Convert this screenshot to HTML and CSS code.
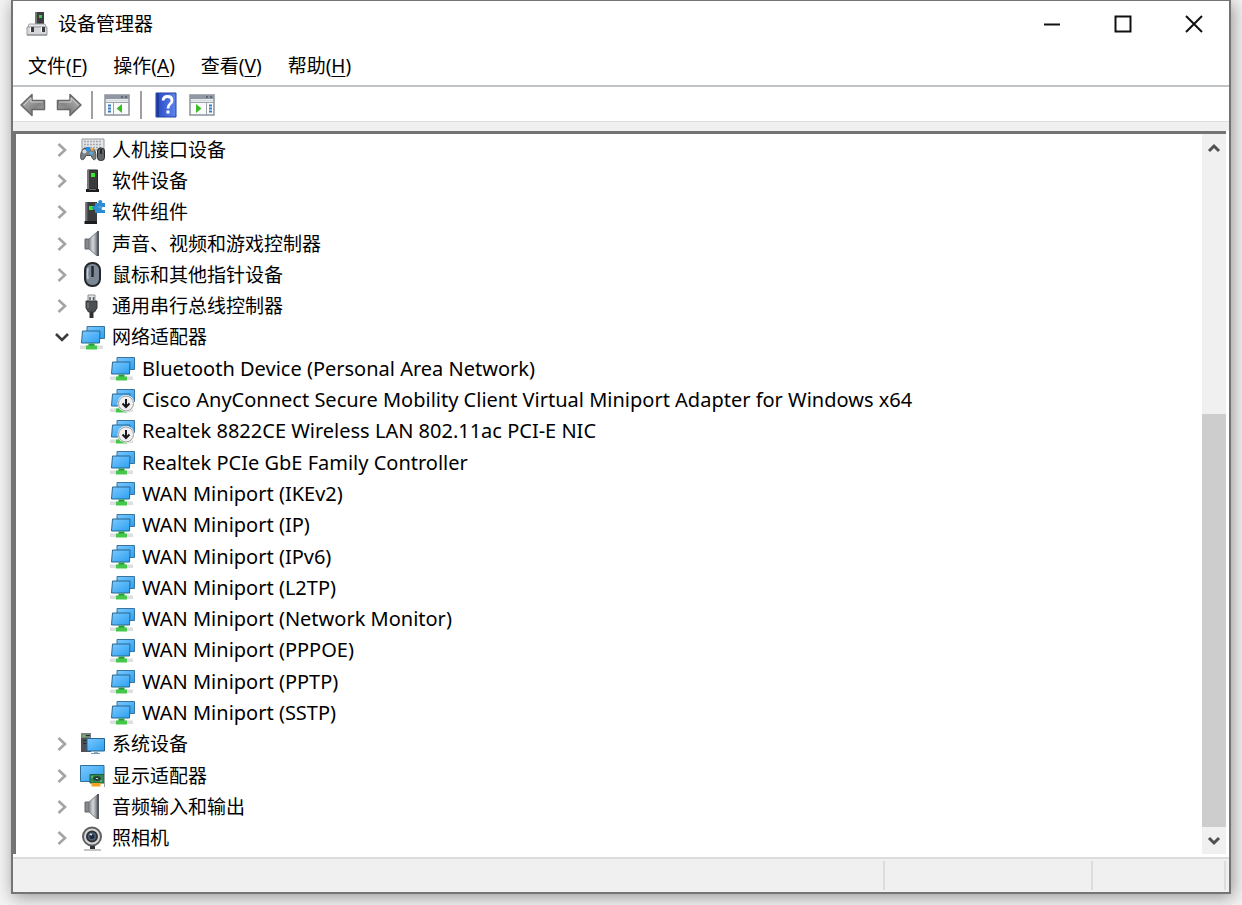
FILE: index.html
```html
<!DOCTYPE html>
<html lang="zh-CN">
<head>
    <meta charset="UTF-8">
    <meta name="viewport" content="width=device-width, initial-scale=1.0">
    <title>设备管理器</title>
    <link rel="stylesheet" href="styles.css">
</head>
<body>
    <!-- Icon sprite -->
    <svg class="sprite" aria-hidden="true">
        <defs>
            <linearGradient id="screen" x1="0" y1="0" x2="1" y2="1">
                <stop offset="0" stop-color="#7cc8ff"/>
                <stop offset="1" stop-color="#2ba0f0"/>
            </linearGradient>
            <linearGradient id="metal" x1="0" y1="0" x2="1" y2="0">
                <stop offset="0" stop-color="#85898d"/>
                <stop offset=".5" stop-color="#d4d8dc"/>
                <stop offset="1" stop-color="#7b7f83"/>
            </linearGradient>
            <linearGradient id="arrow" x1="0" y1="0" x2="1" y2="1">
                <stop offset="0" stop-color="#c4c4c4"/>
                <stop offset=".6" stop-color="#858585"/>
                <stop offset="1" stop-color="#a6a6a6"/>
            </linearGradient>
            <linearGradient id="book" x1="0" y1="0" x2="1" y2="0">
                <stop offset="0" stop-color="#2848b8"/>
                <stop offset=".4" stop-color="#3c60d6"/>
                <stop offset="1" stop-color="#5d86ee"/>
            </linearGradient>
        </defs>
        <symbol id="i-app" viewBox="0 0 24 26">
            <path d="M10 1h9v14h-9z" fill="#3b3d40"/>
            <path d="M10 1h2v14h-2z" fill="#74777a"/>
            <path d="M14 4h3v3h-3z" fill="#38d338"/>
            <path d="M4 13h16l1 3H3z" fill="#e6e7e9" stroke="#a4a6aa"/>
            <path d="M2 16h20v8H2z" fill="#d5d6d9" stroke="#9b9da3"/>
            <path d="M5 16h4v5H5zM16 16h4v5h-4z" fill="#3c3c3e"/>
            <path d="M5 16h1v5H5zM16 16h1v5h-1z" fill="#fff"/>
            <path d="M2 24h20" stroke="#85878d"/>
        </symbol>
        <symbol id="i-hid" viewBox="0 0 25 25">
            <path d="M2 2h22v11H2z" fill="#e4e6e8" stroke="#96999c"/>
            <path d="M4 4.500h18M4 7.500h18M4 10.500h18" stroke="#a5a8ab" stroke-width="1.500" stroke-dasharray="2 1"/>
            <path d="M1 22c-1-3 0-9 3-10.500h2l1 1h3l1-1h2c3 2 3.500 8 2.500 10.500-1 1.500-2.500.5-3-.5l-1.500-3H6l-2 3.500c-1 1-2.500.8-3 0z" fill="#7b8083" stroke="#4b4f52"/>
            <circle cx="4.500" cy="14.500" r="2" fill="#d9dde0"/>
            <path d="M6 10h4v4H6z" fill="#268ee8"/>
            <path d="M11 11h2.500v2.500H11z" fill="#ffae30"/>
            <path d="M10 15h2.500v2.500H10z" fill="#53b5f5"/>
            <rect x="17.500" y="11" width="7" height="12.500" rx="3" fill="#5e6468" stroke="#272a2c"/>
            <path d="M21 12v5" stroke="#16181a" stroke-width="1.500"/>
        </symbol>
        <symbol id="i-tower" viewBox="0 0 25 25">
            <path d="M7.500 2h10v19h-10z" fill="#393b3d" stroke="#232426"/>
            <path d="M7 2h2v19H7z" fill="#77797c"/>
            <path d="M11 5h4v4h-4z" fill="#36ec28"/>
            <path d="M6 21h13v3H6z" fill="#1c1d1e"/>
            <path d="M9 21.500h7" stroke="#686a6c"/>
        </symbol>
        <symbol id="i-component" viewBox="0 0 25 25">
            <path d="M5.500 2H17v19H5.500z" fill="#393b3d"/>
            <path d="M5.500 2h2v19h-2z" fill="#6a6c6f"/>
            <path d="M9 6h4v4H9z" fill="#36ec28"/>
            <path d="M4.500 21H17v3H4.500z" fill="#1c1d1e"/>
            <path d="M15 3h3.500a2 2 0 1 1 3.500 0h3v4h-2a1 1 0 0 0 0 3h2v3H15v-3.500a2 2 0 1 1 0-3.500z" fill="#2d8bd2"/>
            <path d="M18 7h4" stroke="#62b0ea"/>
        </symbol>
        <symbol id="i-speaker" viewBox="0 0 25 25">
            <path d="M5 8h4v10H5z" fill="#85898d" stroke="#606468"/>
            <path d="M9 8l8-7v24l-8-7z" fill="url(#metal)" stroke="#7d8185"/>
            <path d="M17 0h2v25h-2z" fill="#54585c"/>
        </symbol>
        <symbol id="i-mouse" viewBox="0 0 25 25">
            <rect x="5" y="1" width="15" height="23" rx="7" fill="#7b8795" stroke="#24272b" stroke-width="2"/>
            <path d="M8 6q-1 6 0 11" stroke="#c4cfda" stroke-width="1.500" fill="none"/>
            <path d="M12.500 4v11" stroke="#24272b" stroke-width="2.500"/>
        </symbol>
        <symbol id="i-usb" viewBox="0 0 25 25">
            <path d="M8 1h7v7H8z" fill="#e4e5e6" stroke="#8d8f91"/>
            <path d="M10 3v3M13.500 3v3" stroke="#55585a" stroke-width="1.500"/>
            <path d="M6 7h11v7l-2.500 4h-6L6 14z" fill="#4d5053" stroke="#333537"/>
            <path d="M9.500 18h4v6h-4z" fill="#2f3133"/>
            <path d="M8 9v5" stroke="#888b8e"/>
        </symbol>
        <symbol id="i-network" viewBox="0 0 25 25">
            <path d="M7 1.500h17.500v12H7z" fill="url(#screen)" stroke="#37759e"/>
            <path d="M2.500 6h17.500l-.5 12h-18z" fill="url(#screen)" stroke="#27678f"/>
            <path d="M0 20.500h23v3.500H0z" fill="#dddfdf"/>
            <path d="M8.500 18.500h6v2.500h-6z" fill="#259a38"/>
            <path d="M6 20.500h11v4H6z" fill="#44c74a"/>
        </symbol>
        <symbol id="i-disabled" viewBox="0 0 25 25">
            <use href="#i-network"/>
            <circle cx="16" cy="15.500" r="8.500" fill="#fff"/>
            <circle cx="16" cy="15.500" r="7.500" fill="#f0f0f1" stroke="#9b9b9d"/>
            <path d="M16 11v8M12.500 15.500l3.500 3.500 3.500-3.500" fill="none" stroke="#19191a" stroke-width="2"/>
        </symbol>
        <symbol id="i-system" viewBox="0 0 25 25">
            <path d="M1 1h10v19H1z" fill="#4e5153"/>
            <path d="M1 1h10v5H1z" fill="#7c8082"/>
            <path d="M3 3h2v2H3z" fill="#46d846"/>
            <path d="M6 3.500h4M3 8.500h4M3 11.500h4" stroke="#292b2d"/>
            <path d="M7 6.500h17.500V19H7z" fill="url(#screen)" stroke="#24658f"/>
            <path d="M14 19h4v2h-4z" fill="#93adbd"/>
            <path d="M11 21.500h9" stroke="#7a9aae"/>
        </symbol>
        <symbol id="i-display" viewBox="0 0 25 25">
            <path d="M.5 2.500h23.500v16H.5z" fill="url(#screen)" stroke="#2b7099"/>
            <path d="M10 11.500h14V20H10z" fill="#2f8b51" stroke="#21613a"/>
            <ellipse cx="17" cy="15.500" rx="4" ry="2.500" fill="#284437"/>
            <path d="M16 15.500h2" stroke="#c2d8ca"/>
            <path d="M11 14h2M20 18h2" stroke="#7ed29a"/>
            <path d="M11.500 20h9v3.500h-9z" fill="#f1a31e"/>
            <path d="M24.500 9v15" stroke="#9da4a7"/>
        </symbol>
        <symbol id="i-camera" viewBox="0 0 25 25">
            <circle cx="12" cy="10.500" r="9" fill="#d6d7d8" stroke="#5d5f61" stroke-width="2"/>
            <circle cx="12" cy="10.500" r="5" fill="#52647a" stroke="#303235" stroke-width="2"/>
            <circle cx="12" cy="10.500" r="2.500" fill="#1d293b"/>
            <path d="M10 8l2 1" stroke="#c6e1ff" stroke-width="1.500"/>
            <path d="M10 20h5v3h-5z" fill="#2f3133"/>
            <path d="M4 24h17" stroke="#85878a"/>
        </symbol>
        <symbol id="i-right" viewBox="0 0 16 16">
            <path d="M4.500 2l6.500 6-6.500 6" fill="none" stroke="#a4a4a4" stroke-width="2.600"/>
        </symbol>
        <symbol id="i-down" viewBox="0 0 16 16">
            <path d="M2 5l6 6 6-6" fill="none" stroke="#3b3b3b" stroke-width="2.600"/>
        </symbol>
        <symbol id="i-arrow" viewBox="0 0 26 24">
            <path d="M1 12L12 1.500V7.500h12.500v9H12v6z" fill="url(#arrow)" stroke="#686868" stroke-width="1.500" stroke-linejoin="round"/>
            <path d="M4 12l7-7v4h12" fill="none" stroke="#cecece"/>
        </symbol>
        <symbol id="i-pane" viewBox="0 0 26 22">
            <path d="M1 1h24v20H1z" fill="#fafbfc" stroke="#8c939b" stroke-width="1.500"/>
            <path d="M1 1h24v4H1z" fill="#8f98a3"/>
            <path d="M17 3h2M21 3h2" stroke="#4d5967" stroke-width="1.500"/>
            <path d="M2 6.500h22" stroke="#d6dadf" stroke-width="2"/>
            <path d="M1 8.500h24M9.500 9v12" stroke="#9ba2aa"/>
            <path d="M4 11.500h3M4 14.500h3M4 17.500h3" stroke="#367dbb" stroke-width="2"/>
            <path d="M18 10v9l-5.500-4.500z" fill="#3dbb24"/>
        </symbol>
        <symbol id="i-pane-right" viewBox="0 0 26 22">
            <path d="M1 1h24v20H1z" fill="#fafbfc" stroke="#8c939b" stroke-width="1.500"/>
            <path d="M1 1h24v4H1z" fill="#8f98a3"/>
            <path d="M17 3h2M21 3h2" stroke="#4d5967" stroke-width="1.500"/>
            <path d="M2 6.500h22" stroke="#d6dadf" stroke-width="2"/>
            <path d="M1 8.500h24M17.500 9v12" stroke="#9ba2aa"/>
            <path d="M20 11.500h3M20 14.500h3M20 17.500h3" stroke="#367dbb" stroke-width="2"/>
            <path d="M7 10v9l5.500-4.500z" fill="#3dbb24"/>
        </symbol>
        <symbol id="i-help" viewBox="0 0 22 26">
            <path d="M1 1h20v24H1z" fill="url(#book)" stroke="#2443a5"/>
            <path d="M3 1v24" stroke="#203c9b" stroke-width="2"/>
            <path d="M8 8.500Q8.500 4.500 12.500 4.500q4.500 0 4.500 4 0 2-2 3.500t-2 4.500" fill="none" stroke="#fff" stroke-width="2.800"/>
            <path d="M11.500 18.500h3v3h-3z" fill="#fff"/>
        </symbol>
    </svg>

    <div class="window">
        <header class="titlebar">
            <svg class="app-icon"><use href="#i-app"/></svg>
            <h1>设备管理器</h1>
            <div class="window-controls">
                <button type="button" aria-label="最小化"><svg viewBox="0 0 18 18"><path d="M1 9.500h16"/></svg></button>
                <button type="button" aria-label="最大化"><svg viewBox="0 0 18 18"><path d="M1.500 1.500h15v15h-15z"/></svg></button>
                <button type="button" aria-label="关闭"><svg viewBox="0 0 18 18"><path d="M1 1l16 16M17 1L1 17"/></svg></button>
            </div>
        </header>

        <nav class="menubar">
            <button type="button">文件(<u>F</u>)</button>
            <button type="button">操作(<u>A</u>)</button>
            <button type="button">查看(<u>V</u>)</button>
            <button type="button">帮助(<u>H</u>)</button>
        </nav>

        <div class="toolbar">
            <button type="button" aria-label="后退"><svg><use href="#i-arrow"/></svg></button>
            <button type="button" aria-label="前进" class="forward"><svg><use href="#i-arrow"/></svg></button>
            <span class="divider"></span>
            <button type="button" aria-label="显示/隐藏控制台树"><svg><use href="#i-pane"/></svg></button>
            <span class="divider"></span>
            <button type="button" aria-label="帮助"><svg><use href="#i-help"/></svg></button>
            <button type="button" aria-label="显示/隐藏操作窗格"><svg><use href="#i-pane-right"/></svg></button>
        </div>
        <div class="band"></div>

        <main class="content">
            <ul class="tree">
                <li class="row"><button type="button" class="toggle" aria-label="展开"><svg><use href="#i-right"/></svg></button><svg class="icon"><use href="#i-hid"/></svg><span>人机接口设备</span></li>
                <li class="row"><button type="button" class="toggle" aria-label="展开"><svg><use href="#i-right"/></svg></button><svg class="icon"><use href="#i-tower"/></svg><span>软件设备</span></li>
                <li class="row"><button type="button" class="toggle" aria-label="展开"><svg><use href="#i-right"/></svg></button><svg class="icon"><use href="#i-component"/></svg><span>软件组件</span></li>
                <li class="row"><button type="button" class="toggle" aria-label="展开"><svg><use href="#i-right"/></svg></button><svg class="icon"><use href="#i-speaker"/></svg><span>声音、视频和游戏控制器</span></li>
                <li class="row"><button type="button" class="toggle" aria-label="展开"><svg><use href="#i-right"/></svg></button><svg class="icon"><use href="#i-mouse"/></svg><span>鼠标和其他指针设备</span></li>
                <li class="row"><button type="button" class="toggle" aria-label="展开"><svg><use href="#i-right"/></svg></button><svg class="icon"><use href="#i-usb"/></svg><span>通用串行总线控制器</span></li>
                <li class="group">
                    <div class="row"><button type="button" class="toggle" aria-label="折叠"><svg><use href="#i-down"/></svg></button><svg class="icon"><use href="#i-network"/></svg><span>网络适配器</span></div>
                    <ul class="group">
                        <li class="row child"><svg class="icon"><use href="#i-network"/></svg><span>Bluetooth Device (Personal Area Network)</span></li>
                        <li class="row child"><svg class="icon"><use href="#i-disabled"/></svg><span>Cisco AnyConnect Secure Mobility Client Virtual Miniport Adapter for Windows x64</span></li>
                        <li class="row child"><svg class="icon"><use href="#i-disabled"/></svg><span>Realtek 8822CE Wireless LAN 802.11ac PCI-E NIC</span></li>
                        <li class="row child"><svg class="icon"><use href="#i-network"/></svg><span>Realtek PCIe GbE Family Controller</span></li>
                        <li class="row child"><svg class="icon"><use href="#i-network"/></svg><span>WAN Miniport (IKEv2)</span></li>
                        <li class="row child"><svg class="icon"><use href="#i-network"/></svg><span>WAN Miniport (IP)</span></li>
                        <li class="row child"><svg class="icon"><use href="#i-network"/></svg><span>WAN Miniport (IPv6)</span></li>
                        <li class="row child"><svg class="icon"><use href="#i-network"/></svg><span>WAN Miniport (L2TP)</span></li>
                        <li class="row child"><svg class="icon"><use href="#i-network"/></svg><span>WAN Miniport (Network Monitor)</span></li>
                        <li class="row child"><svg class="icon"><use href="#i-network"/></svg><span>WAN Miniport (PPPOE)</span></li>
                        <li class="row child"><svg class="icon"><use href="#i-network"/></svg><span>WAN Miniport (PPTP)</span></li>
                        <li class="row child"><svg class="icon"><use href="#i-network"/></svg><span>WAN Miniport (SSTP)</span></li>
                    </ul>
                </li>
                <li class="row"><button type="button" class="toggle" aria-label="展开"><svg><use href="#i-right"/></svg></button><svg class="icon"><use href="#i-system"/></svg><span>系统设备</span></li>
                <li class="row"><button type="button" class="toggle" aria-label="展开"><svg><use href="#i-right"/></svg></button><svg class="icon"><use href="#i-display"/></svg><span>显示适配器</span></li>
                <li class="row"><button type="button" class="toggle" aria-label="展开"><svg><use href="#i-right"/></svg></button><svg class="icon"><use href="#i-speaker"/></svg><span>音频输入和输出</span></li>
                <li class="row"><button type="button" class="toggle" aria-label="展开"><svg><use href="#i-right"/></svg></button><svg class="icon"><use href="#i-camera"/></svg><span>照相机</span></li>
            </ul>
            <div class="scrollbar">
                <button type="button" aria-label="向上滚动"><svg viewBox="0 0 14 12"><path d="M2 9l5-5 5 5"/></svg></button>
                <div class="track"><div class="thumb"></div></div>
                <button type="button" aria-label="向下滚动"><svg viewBox="0 0 14 12"><path d="M2 3l5 5 5-5"/></svg></button>
            </div>
        </main>

        <footer class="statusbar">
            <span class="cell main"></span>
            <span class="cell wide"></span>
            <span class="cell"></span>
        </footer>
    </div>
</body>
</html>
```
FILE: styles.css
```css
:root {
    --background: #f4f4f4;
    --surface: #ffffff;
    --panel: #f0f0f0;
    --frame: #747474;
    --line: #dcdcdc;
    --text: #000000;
    --thumb: #cdcdcd;
}

* {
    box-sizing: border-box;
}

body {
    font-family: "Noto Sans", "Noto Sans CJK SC", sans-serif;
    font-size: 19px;
    line-height: 28px;
    color: var(--text);
    background-color: var(--background);
    margin: 0;
    padding: 0 11px 11px;
    display: flex;
    min-height: 100vh;
}

button {
    font: inherit;
    color: inherit;
    background: none;
    border: none;
    padding: 0;
    display: flex;
    align-items: center;
    justify-content: center;
}

ul {
    list-style: none;
    margin: 0;
    padding: 0;
}

.sprite {
    position: absolute;
    width: 0;
    height: 0;
}

.window {
    flex: 1;
    display: flex;
    flex-direction: column;
    background-color: var(--surface);
    border: 2px solid var(--frame);
    border-top-width: 1px;
    box-shadow: 2px 3px 16px rgba(0, 0, 0, 0.4);
}

/* Title bar */
.titlebar {
    display: flex;
    align-items: center;
    height: 46px;
    padding-left: 12px;
}

.app-icon {
    width: 24px;
    height: 26px;
    margin-right: 9px;
}

h1 {
    font-size: 19px;
    font-weight: normal;
    margin: 0;
}

.window-controls {
    display: flex;
    align-self: stretch;
    margin-left: auto;
}

.window-controls button {
    width: 71px;
}

.window-controls svg {
    width: 18px;
    height: 18px;
    fill: none;
    stroke: #111111;
    stroke-width: 2;
}

/* Menu bar */
.menubar {
    display: flex;
    height: 40px;
    padding-left: 2px;
    border-bottom: 2px solid #c0c3c6;
}

.menubar button {
    padding: 0 13px;
}

.menubar u {
    text-underline-offset: 3px;
    text-decoration-thickness: 1px;
}

/* Toolbar */
.toolbar {
    display: flex;
    align-items: center;
    height: 35px;
    padding: 2px 0 0 7px;
    border-bottom: 1px solid var(--line);
}

.toolbar button {
    width: 26px;
    margin-right: 10px;
}

.toolbar svg {
    width: 26px;
    height: 26px;
}

.toolbar .forward {
    transform: scaleX(-1);
    margin-right: 9px;
}

.divider {
    width: 2px;
    height: 28px;
    margin-right: 11px;
    background-color: #a0a0a0;
}

.band {
    height: 9px;
    background-color: var(--panel);
}

/* Device tree */
.content {
    flex: 1;
    display: flex;
    border: solid var(--frame);
    border-width: 3px 0 0 3px;
    margin: 0 3px 0 0;
}

.tree {
    flex: 1;
    display: flex;
    flex-direction: column;
}

.group {
    display: contents;
}

.row {
    flex: 1;
    min-height: 28px;
    display: flex;
    align-items: center;
    padding-left: 38px;
    white-space: nowrap;
}

.row.child {
    padding-left: 94px;
    font-size: 20px;
}

.toggle {
    width: 16px;
    margin-right: 10px;
}

.toggle svg {
    width: 16px;
    height: 16px;
}

.icon {
    width: 25px;
    height: 25px;
    margin-right: 7px;
}

/* Scroll bar */
.scrollbar {
    width: 24px;
    display: flex;
    flex-direction: column;
    background-color: var(--panel);
}

.scrollbar button {
    height: 27px;
}

.scrollbar svg {
    width: 14px;
    height: 12px;
    fill: none;
    stroke: #505050;
    stroke-width: 3;
}

.track {
    flex: 1;
    display: flex;
    align-items: flex-end;
}

.thumb {
    width: 100%;
    height: 62%;
    background-color: var(--thumb);
}

/* Status bar */
.statusbar {
    display: flex;
    height: 35px;
    margin-top: 3px;
    padding: 2px 3px 2px 0;
    background-color: var(--panel);
    border-top: 2px solid var(--line);
}

.cell {
    flex: 132;
    border-right: 2px solid var(--line);
}

.cell.wide {
    flex: 208;
}

.cell.main {
    flex: 876;
}
```
